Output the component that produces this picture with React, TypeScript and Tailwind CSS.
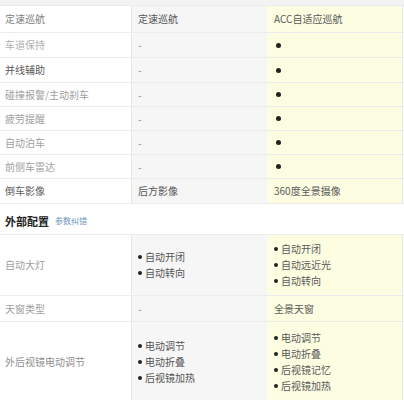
import React from "react";

const FONT = { fontFamily: '"Noto Sans CJK SC", "Noto Sans", sans-serif' };

type Cell = string | { list: string[] } | "dot";

type Row = { h: string; label: string; labelColor: string; c2: Cell; c3: Cell };

const rows1: Row[] = [
  { h: "h-[27px]", label: "定速巡航", labelColor: "text-[#808080]", c2: "定速巡航", c3: "ACC自适应巡航" },
  { h: "h-[25px]", label: "车道保持", labelColor: "text-[#b0b0b0]", c2: "-", c3: "dot" },
  { h: "h-[25px]", label: "并线辅助", labelColor: "text-[#5a5a5a]", c2: "-", c3: "dot" },
  { h: "h-[24px]", label: "碰撞报警/主动刹车", labelColor: "text-[#a0a0a0]", c2: "-", c3: "dot" },
  { h: "h-[24px]", label: "疲劳提醒", labelColor: "text-[#a0a0a0]", c2: "-", c3: "dot" },
  { h: "h-[24px]", label: "自动泊车", labelColor: "text-[#a0a0a0]", c2: "-", c3: "dot" },
  { h: "h-[24px]", label: "前侧车雷达", labelColor: "text-[#a0a0a0]", c2: "-", c3: "dot" },
  { h: "h-[25px]", label: "倒车影像", labelColor: "text-[#606060]", c2: "后方影像", c3: "360度全景摄像" },
];

const rows2: Row[] = [
  { h: "h-[61px]", label: "自动大灯", labelColor: "text-[#a0a0a0]", c2: { list: ["自动开闭", "自动转向"] }, c3: { list: ["自动开闭", "自动远近光", "自动转向"] } },
  { h: "h-[26px]", label: "天窗类型", labelColor: "text-[#a0a0a0]", c2: "-", c3: "全景天窗" },
  { h: "h-[80px]", label: "外后视镜电动调节", labelColor: "text-[#909090]", c2: { list: ["电动调节", "电动折叠", "后视镜加热"] }, c3: { list: ["电动调节", "电动折叠", "后视镜记忆", "后视镜加热"] } },
];

function renderCell(c: Cell, textColor: string) {
  if (c === "dot") {
    return <span className="inline-block w-[5px] h-[5px] rounded-full bg-[#222] ml-[2px]" />;
  }
  if (typeof c === "string") {
    return <span className={c === "-" ? "text-[#8a8a8a]" : textColor}>{c}</span>;
  }
  return (
    <div className="flex flex-col">
      {c.list.map((t) => (
        <div key={t} className={`flex items-center gap-[3px] h-[16px] ${textColor}`}>
          <span className="inline-block w-[4px] h-[4px] rounded-full bg-[#222]" />
          <span>{t}</span>
        </div>
      ))}
    </div>
  );
}

function TableRow({ r }: { r: Row }) {
  return (
    <div className={`flex ${r.h} border-t border-[#ececec]`}>
      <div className={`w-[131px] shrink-0 flex items-center pl-[5px] bg-white ${r.labelColor}`}>{r.label}</div>
      <div className="w-[1px] bg-[#e6e6e6]" />
      <div className="w-[135px] shrink-0 flex items-center pl-[6px] bg-[#f6f6f6]">{renderCell(r.c2, "text-[#555]")}</div>
      <div className="w-[135px] shrink-0 flex items-center pl-[7px] bg-[#fdfde2]">{renderCell(r.c3, "text-[#5a5a5a]")}</div>
      <div className="w-[1px] bg-[#e8e8e8]" />
      <div className="flex-1 bg-white" />
    </div>
  );
}

export default function App() {
  return (
    <div className="w-[404px] h-[400px] overflow-hidden bg-white text-[10px] leading-none" style={FONT}>
      <div className="h-[5px] bg-[#f3f3f3]" />
      {rows1.map((r) => (
        <TableRow key={r.label} r={r} />
      ))}
      <div className="h-[31px] border-t border-[#ececec] flex items-center pl-[5px] pt-[4px] gap-[6px] bg-white">
        <span className="text-[11px] font-bold text-[#222]">外部配置</span>
        <span className="text-[8px] text-[#6b93c0]">参数纠错</span>
      </div>
      {rows2.map((r) => (
        <TableRow key={r.label} r={r} />
      ))}
    </div>
  );
}
